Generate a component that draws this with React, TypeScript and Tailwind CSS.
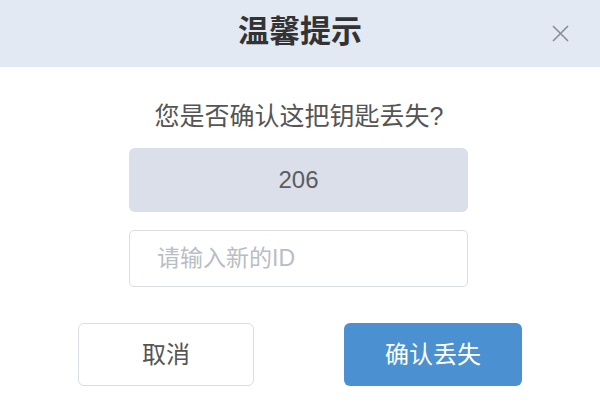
export default function App() {
  const font = { fontFamily: '"Liberation Sans", Arial, "Noto Sans CJK SC", sans-serif' };
  return (
    <div className="w-[600px] h-[410px] bg-white flex flex-col" style={font}>
      <div className="relative h-[67px] bg-[#e3e9f3] flex items-center justify-center shrink-0">
        <span className="text-[31px] font-bold text-[#333] leading-none pb-[4px]">温馨提示</span>
        <svg className="absolute left-[552px] top-[25px]" width="17" height="17" viewBox="0 0 17 17">
          <path d="M1 1 L16 16 M16 1 L1 16" stroke="#8a8d93" strokeWidth="1.6" fill="none" />
        </svg>
      </div>
      <div className="flex flex-col items-center">
        <div className="mt-[35px] text-[25px] leading-[29px] text-[#555] pr-[2px]">您是否确认这把钥匙丢失?</div>
        <div className="mt-[17px] w-[339px] h-[64px] rounded-[6px] bg-[#dadfea] flex items-center justify-center text-[24px] text-[#5a5d63] mr-[3px]">
          206
        </div>
        <input
          className="mt-[18px] w-[339px] h-[57px] rounded-[5px] border border-[#d9dde4] px-[27px] text-[23px] text-[#555] placeholder:text-[#b9bdc4] outline-none mr-[3px]"
          placeholder="请输入新的ID"
          style={font}
        />
        <div className="mt-[36px] flex gap-[90px]">
          <button className="w-[176px] h-[63px] rounded-[6px] border border-[#d9dde4] bg-white text-[24px] text-[#555]" style={font}>
            取消
          </button>
          <button className="w-[178px] h-[63px] rounded-[6px] bg-[#4b91d1] text-[24px] text-white" style={font}>
            确认丢失
          </button>
        </div>
      </div>
    </div>
  );
}
